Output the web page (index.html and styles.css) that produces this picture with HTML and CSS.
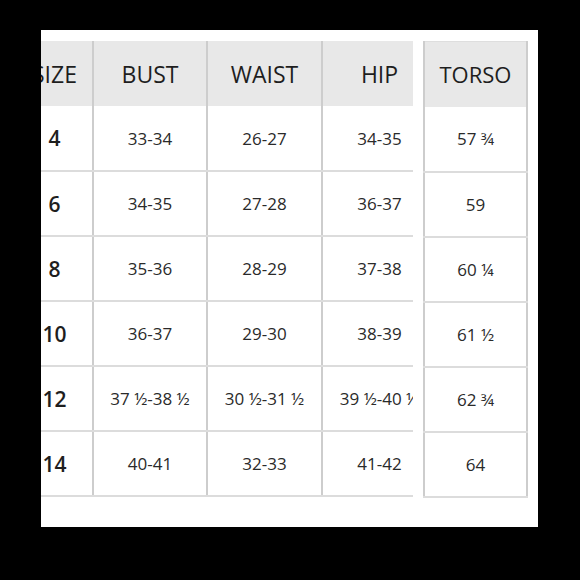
FILE: index.html
```html
<!DOCTYPE html>
<html>
<head>
<meta charset="utf-8">
<link rel="stylesheet" href="styles.css">
</head>
<body>
<div class="panel">
  <div class="main-wrap">
    <table class="chart main">
      <thead>
        <tr><th class="c-size">SIZE</th><th class="c-bust">BUST</th><th class="c-waist">WAIST</th><th class="c-hip">HIP</th></tr>
      </thead>
      <tbody>
        <tr><td class="size">4</td><td>33-34</td><td>26-27</td><td>34-35</td></tr>
        <tr><td class="size">6</td><td>34-35</td><td>27-28</td><td>36-37</td></tr>
        <tr><td class="size">8</td><td>35-36</td><td>28-29</td><td>37-38</td></tr>
        <tr><td class="size">10</td><td>36-37</td><td>29-30</td><td>38-39</td></tr>
        <tr><td class="size">12</td><td>37 ½-38 ½</td><td>30 ½-31 ½</td><td>39 ½-40 ½</td></tr>
        <tr><td class="size">14</td><td>40-41</td><td>32-33</td><td>41-42</td></tr>
      </tbody>
    </table>
  </div>
  <table class="chart torso">
    <thead>
      <tr><th>TORSO</th></tr>
    </thead>
    <tbody>
      <tr><td>57 ¾</td></tr>
      <tr><td>59</td></tr>
      <tr><td>60 ¼</td></tr>
      <tr><td>61 ½</td></tr>
      <tr><td>62 ¾</td></tr>
      <tr><td>64</td></tr>
    </tbody>
  </table>
</div>
</body>
</html>
```

FILE: styles.css
```css
html, body {
  margin: 0;
  padding: 0;
  background: #000;
}
body {
  width: 580px;
  height: 580px;
  font-family: "Open Sans", "Liberation Sans", sans-serif;
}
.panel {
  margin: 30px 0 0 41px;
  width: 497px;
  height: 497px;
  box-sizing: border-box;
  padding-top: 11px;
  background: #fff;
  display: flex;
  align-items: flex-start;
  gap: 10px;
}
.main-wrap {
  width: 372px;
  overflow: hidden;
  flex: none;
}
.chart {
  border-collapse: collapse;
  table-layout: fixed;
  color: #2a2a2a;
}
.main {
  margin-left: -24px;
  width: 419px;
}
.chart th,
.chart td {
  text-align: center;
  padding: 0;
  box-sizing: border-box;
  white-space: nowrap;
  overflow: hidden;
}
.chart th {
  background: #e8e8e8;
  height: 65px;
  font-size: 23px;
  font-weight: 500;
  color: #1e1e1e;
}
.chart td {
  height: 65px;
  font-size: 17px;
  font-weight: 400;
  border-bottom: 2px solid #dcdcdc;
  color: #2a2a2a;
}
.main th + th,
.main td + td {
  border-left: 2px solid #cdcdcd;
}
.c-size { width: 76px; }
.c-bust { width: 114px; }
.c-waist { width: 115px; }
.c-hip { width: 114px; }
.main td.size {
  font-size: 21px;
  font-weight: 600;
  color: #1e1e1e;
}
.torso {
  width: 105px;
  flex: none;
  border-left: 2px solid #cdcdcd;
  border-right: 2px solid #cdcdcd;
  border-top: 1px solid #dedede;
}
.torso th {
  font-size: 22px;
}
```
